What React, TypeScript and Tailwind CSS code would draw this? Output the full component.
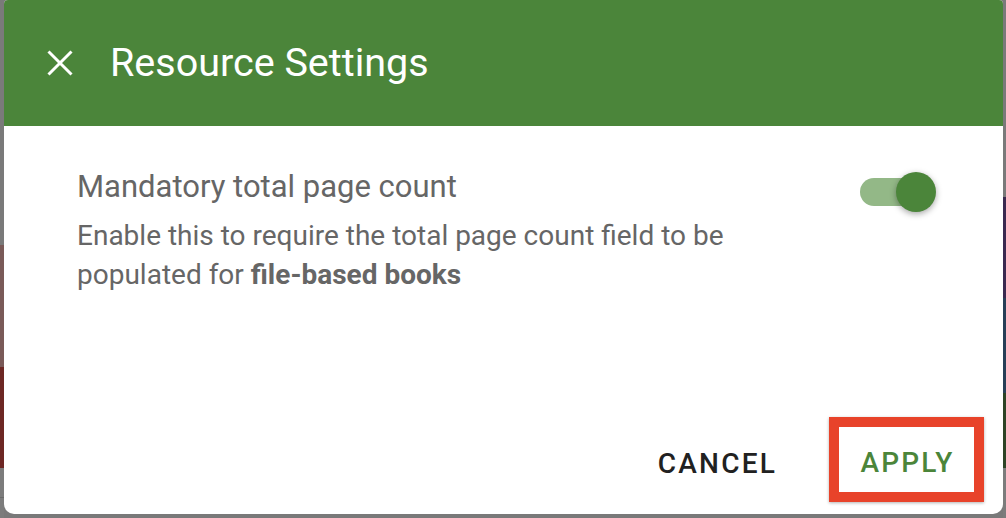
export default function App() {
  return (
    <div className="flex h-[518px] w-[1006px] overflow-hidden bg-[#797979] font-['Roboto',sans-serif]">
      {/* backdrop slivers peeking out beside the dialog */}
      <div className="flex w-[4px] shrink-0 flex-col">
        <div className="h-[245px] bg-[#7a7a7a]" />
        <div className="h-[122px] bg-[#7a5a58]" />
        <div className="h-[101px] bg-[#6d2724]" />
        <div className="h-[29px] bg-[#7c7c7c]" />
        <div className="h-[1px] bg-[#6a6a6a]" />
        <div className="flex-1 bg-[#7c7c7c]" />
      </div>

      <div className="flex h-[514px] w-[999px] shrink-0 flex-col overflow-hidden rounded-b-[10px] rounded-t-[4px] bg-white">
        <div className="flex h-[126px] shrink-0 items-center bg-[#4b853a] pl-[43px]">
          <svg width="26" height="26" viewBox="0 0 26 26" className="shrink-0">
            <path d="M1.5 1.5 L24.5 24.5 M24.5 1.5 L1.5 24.5" stroke="white" strokeWidth="3" />
          </svg>
          <h2 className="ml-[37px] text-[39.5px] font-normal leading-none text-white">Resource Settings</h2>
        </div>

        <div className="flex flex-1 items-start justify-between pl-[73px] pr-[67px] pt-[43px]">
          <div className="flex flex-col">
            <div className="text-[31px] leading-[36px] text-[#666666]">Mandatory total page count</div>
            <p className="mt-[11px] w-[680px] text-[28px] leading-[39px] text-[#666666]">
              Enable this to require the total page count field to be populated for{" "}
              <span className="font-bold">file-based books</span>
            </p>
          </div>
          <div className="relative mt-[3px] h-[40px] w-[76px] shrink-0">
            <div className="absolute left-0 top-[6px] h-[28px] w-[68px] rounded-full bg-[#93b887]" />
            <div className="absolute right-0 top-0 h-[40px] w-[40px] rounded-full bg-[#4b853a] shadow-[0_2px_6px_rgba(0,0,0,0.35)]" />
          </div>
        </div>

        <div className="flex shrink-0 items-center justify-end gap-[30px] pb-[12px] pr-[19px]">
          <button className="mt-[8px] h-[60px] px-[22px] text-[28px] font-medium tracking-[2.2px] text-[#212121]">CANCEL</button>
          <div className="flex h-[85px] w-[155px] items-center justify-center border-[10px] border-[#e8432a] shadow-[0_1px_3px_rgba(0,0,0,0.3)]">
            <button className="mt-[6px] pl-[2px] text-[28px] font-medium tracking-[2.2px] text-[#4b853a]">APPLY</button>
          </div>
        </div>
      </div>

      <div className="flex flex-1 flex-col">
        <div className="h-[197px] bg-[#7a7a7a]" />
        <div className="h-[101px] bg-[#3b2950]" />
        <div className="h-[95px] bg-[#283f57]" />
        <div className="h-[75px] bg-[#2e4426]" />
        <div className="flex-1 bg-[#7c7c7c]" />
      </div>
    </div>
  );
}
